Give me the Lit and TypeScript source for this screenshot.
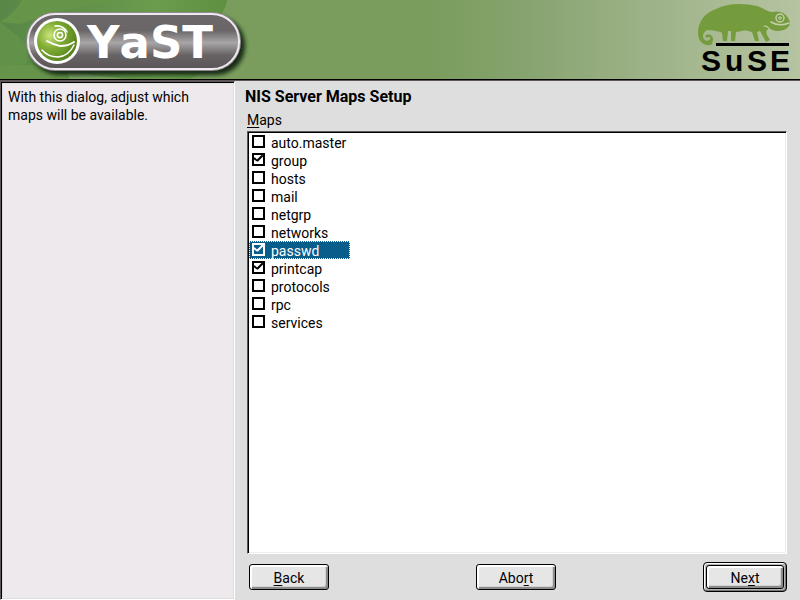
import { LitElement, html, css } from "lit";
import { customElement, state } from "lit/decorators.js";

interface MapEntry {
  name: string;
  checked: boolean;
}

@customElement("yast-logo")
class YastLogo extends LitElement {
  static styles = css`
    :host { display: block; }
    svg { display: block; }
    .word { font: bold 45px "DejaVu Sans", Verdana, sans-serif; font-kerning: none; fill: #fff; }
  `;
  render() {
    return html`
      <svg width="300" height="79" viewBox="0 0 300 79" role="img" aria-label="YaST">
        <defs>
          <linearGradient id="pill" x1="0" y1="0" x2="0" y2="1">
            <stop offset="0" stop-color="#6c686a" />
            <stop offset=".3" stop-color="#6a6668" />
            <stop offset=".52" stop-color="#a9a6a8" />
            <stop offset=".75" stop-color="#676365" />
            <stop offset="1" stop-color="#5a5658" />
          </linearGradient>
          <radialGradient id="ball" cx=".32" cy=".36" r=".7">
            <stop offset="0" stop-color="#c9e47c" />
            <stop offset=".45" stop-color="#82ad35" />
            <stop offset="1" stop-color="#56841c" />
          </radialGradient>
          <linearGradient id="leaf" x1="0" y1="0" x2="1" y2="0">
            <stop offset="0" stop-color="#588748" />
            <stop offset=".7" stop-color="#6b9b4c" />
            <stop offset="1" stop-color="#5e9040" />
          </linearGradient>
          <filter id="soft" x="-10%" y="-20%" width="120%" height="150%">
            <feGaussianBlur stdDeviation="2" />
          </filter>
        </defs>
        <path d="M0 0H227Q226 10 215 22L205 79H0Z" fill="url(#leaf)" />
        <path d="M0 22Q14 32 30 48L26 64L0 66Z" fill="#629149" />
        <path d="M22 0H130Q70 6 20 24L0 22Q16 12 22 0Z" fill="#669549" />
        <path d="M0 66Q40 60 75 79H0Z" fill="#65944a" />
        <path d="M70 79Q66 72 70 70Q90 76 130 79Z" fill="#7fa568" />
        <path d="M190 79Q225 60 245 30V79Z" fill="#7a9d5e" />
        <rect x="30" y="16" width="215" height="59" rx="29" fill="#182b12" filter="url(#soft)" />
        <rect x="26" y="12" width="215" height="59" rx="29" fill="#908a8e" />
        <rect x="28" y="14" width="211" height="55" rx="27" fill="url(#pill)" stroke="#f0eaf0" stroke-width="2" />
        <circle cx="57" cy="41" r="23" fill="#fff" />
        <circle cx="57" cy="41" r="20" fill="url(#ball)" />
        <g fill="none" stroke="#fff" stroke-linecap="round">
          <circle cx="60" cy="35" r="6" stroke-width="1.5" />
          <circle cx="60" cy="35" r="2.6" stroke-width="1.5" />
          <path d="M55 26Q63 25 67 32" stroke-width="1.5" />
          <path d="M47 41Q54 45 60 46Q68 46 74 42" stroke-width="2" />
          <path d="M42 50Q48 57 58 57Q69 56 74 45" stroke-width="1.5" />
        </g>
        <text class="word" x="87" y="58">YaST</text>
      </svg>
    `;
  }
}

@customElement("suse-logo")
class SuseLogo extends LitElement {
  static styles = css`
    :host { display: block; }
    svg { display: block; }
    .word { font: bold 30px "Liberation Sans", Arial, sans-serif; fill: #000; }
  `;
  render() {
    return html`
      <svg width="104" height="79" viewBox="696 0 104 79" role="img" aria-label="SuSE">
        <path
          fill="#749b3c"
          d="M711 45C703 46 698 41 698 33C698 22 704 13 716 9C727 3 743 3 757 6C764 8 767 12 773 12C781 10 787 14 790 22
             C790 28 784 31 777 31C774 31 771 29 769 29C766 30 766 32 767 35L770 40L766 42L760 31L757 32L759 41H755L752 32
             C748 31 745 30 742 31L736 32L735 41H731V31H728L727 41H723L722 33C720 31 714 31 709 30C705 30 703 33 703 37
             C704 41 708 42 710 39C711 37 709 36 707 38L705 36C708 33 713 35 713 39C713 42 712 44 711 45Z"
        />
        <g fill="none" stroke="#c3cfab" stroke-linecap="round">
          <circle cx="780" cy="18" r="4" stroke-width="1.4" />
          <circle cx="780" cy="18" r="1.3" stroke-width="1" />
          <path d="M771 22Q779 27 789 23" stroke-width="1.5" />
          <path d="M764 26Q768 26 770 30" stroke-width="1.2" />
        </g>
        <rect x="716" y="43" width="73" height="3" fill="#000" />
        <text class="word" x="701" y="71">S</text>
        <text class="word" x="725" y="71">u</text>
        <text class="word" x="747" y="71">S</text>
        <text class="word" x="770" y="71">E</text>
      </svg>
    `;
  }
}

@customElement("app-root")
class AppRoot extends LitElement {
  static styles = css`
    :host {
      display: flex;
      flex-direction: column;
      min-height: 100vh;
      box-sizing: border-box;
      background: #dedede;
      color: #000;
      font: 14px/18px Roboto, "Liberation Sans", sans-serif;
    }
    * { box-sizing: border-box; }
    header {
      display: flex;
      justify-content: space-between;
      background: linear-gradient(90deg, #7a9d5e 0%, #7a9d5e 54%, #86a36e 65%, #9db288 81%, #b6c4a1 100%);
      border-bottom: 1px solid #000;
      box-shadow: 0 1px #5e5658;
    }
    .body {
      flex: 1;
      display: grid;
      grid-template-columns: minmax(0, 235fr) minmax(0, 565fr);
      padding-top: 1px;
    }
    .help {
      background: #eee9ed;
      border: 1px solid #fff;
      border-top-color: #5e5658;
      border-left-color: #5e5658;
      box-shadow: inset 1px 1px #000, inset -1px -1px #dedede, inset 2px 2px #dedede;
      padding: 6px 7px;
    }
    .help p { margin: 0; }
    main {
      display: flex;
      flex-direction: column;
      padding: 7px 13px 8px 12px;
    }
    h1 { margin: 0 0 0 -2px; font-size: 16px; line-height: 18px; font-weight: 700; }
    .caption { margin-top: 5px; }
    .list {
      flex: 1;
      margin-top: 2px;
      background: #fff;
      border: 1px solid #fff;
      border-top-color: #5e5658;
      border-left-color: #5e5658;
      box-shadow: inset 1px 1px #000, inset -1px -1px #eee;
      padding: 1px;
    }
    .list ul {
      display: grid;
      width: max-content;
      margin: 0;
      padding: 0;
      list-style: none;
    }
    .row {
      display: flex;
      align-items: center;
      gap: 6px;
      height: 18px;
      padding: 0 4px 0 3px;
    }
    .row span { padding-top: 2px; }
    .row.current {
      background: #085d8b;
      color: #fff;
      outline: 1px dotted #fff;
      outline-offset: -1px;
    }
    input {
      appearance: none;
      width: 13px;
      height: 13px;
      margin: 0 0 2px;
      border: 2px solid currentColor;
      background: transparent;
      color: inherit;
      outline: none;
    }
    input:checked::before {
      content: "";
      display: block;
      width: 9px;
      height: 9px;
      background: currentColor;
      clip-path: polygon(0 3px, 1px 3px, 3px 5px, 8px 0, 9px 1px, 9px 2px, 4px 7px, 3px 7px, 0 5px);
    }
    footer {
      display: flex;
      align-items: center;
      justify-content: space-between;
      margin-top: 8px;
      padding-left: 2px;
    }
    button {
      width: 80px;
      height: 26px;
      padding: 2px 0 0;
      border: 1px solid #000;
      border-radius: 3px;
      background: #e6e6e6;
      box-shadow: inset 2px 2px #fff, inset -2px -2px #8b8b8b, inset -3px -3px #d4d4d4;
      color: inherit;
      font: inherit;
    }
    .default {
      padding: 2px;
      border: 1px solid #000;
      border-radius: 4px;
      background: #b4b6b2;
      box-shadow: inset 1px 1px #fff, inset -1px -1px #777;
    }
    .default button { display: block; width: 78px; height: 24px; }
    u { text-underline-offset: 2px; text-decoration-thickness: 1px; }
  `;

  @state() private current = "passwd";
  @state() private maps: MapEntry[] = [
    { name: "auto.master", checked: false },
    { name: "group", checked: true },
    { name: "hosts", checked: false },
    { name: "mail", checked: false },
    { name: "netgrp", checked: false },
    { name: "networks", checked: false },
    { name: "passwd", checked: true },
    { name: "printcap", checked: true },
    { name: "protocols", checked: false },
    { name: "rpc", checked: false },
    { name: "services", checked: false },
  ];

  private toggle(name: string) {
    this.current = name;
    this.maps = this.maps.map((m) => (m.name === name ? { ...m, checked: !m.checked } : m));
  }

  render() {
    return html`
      <header>
        <yast-logo></yast-logo>
        <suse-logo></suse-logo>
      </header>
      <div class="body">
        <aside class="help">
          <p>With this dialog, adjust which maps will be available.</p>
        </aside>
        <main>
          <h1>NIS Server Maps Setup</h1>
          <div class="caption" id="maps-label"><u>M</u>aps</div>
          <div class="list" role="group" aria-labelledby="maps-label">
            <ul>
              ${this.maps.map(
                (m) => html`
                  <li>
                    <label class="row ${m.name === this.current ? "current" : ""}">
                      <input type="checkbox" .checked=${m.checked} @change=${() => this.toggle(m.name)} />
                      <span>${m.name}</span>
                    </label>
                  </li>
                `
              )}
            </ul>
          </div>
          <footer>
            <button type="button"><u>B</u>ack</button>
            <button type="button">Abo<u>r</u>t</button>
            <div class="default"><button type="submit">Ne<u>x</u>t</button></div>
          </footer>
        </main>
      </div>
    `;
  }
}
